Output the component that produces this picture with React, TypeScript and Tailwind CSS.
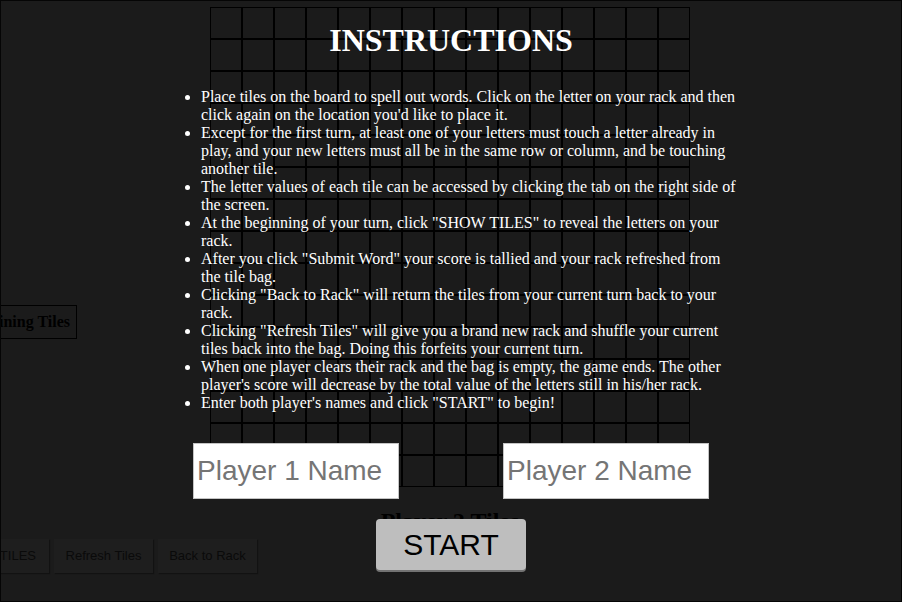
import React from "react";

const items: string[][] = [
  [
    "Place tiles on the board to spell out words. Click on the letter on your rack and then",
    "click again on the location you'd like to place it.",
  ],
  [
    "Except for the first turn, at least one of your letters must touch a letter already in",
    "play, and your new letters must all be in the same row or column, and be touching",
    "another tile.",
  ],
  [
    "The letter values of each tile can be accessed by clicking the tab on the right side of",
    "the screen.",
  ],
  [
    'At the beginning of your turn, click "SHOW TILES" to reveal the letters on your',
    "rack.",
  ],
  [
    'After you click "Submit Word" your score is tallied and your rack refreshed from',
    "the tile bag.",
  ],
  [
    'Clicking "Back to Rack" will return the tiles from your current turn back to your',
    "rack.",
  ],
  [
    'Clicking "Refresh Tiles" will give you a brand new rack and shuffle your current',
    "tiles back into the bag. Doing this forfeits your current turn.",
  ],
  [
    "When one player clears their rack and the bag is empty, the game ends. The other",
    "player's score will decrease by the total value of the letters still in his/her rack.",
  ],
  ['Enter both player\'s names and click "START" to begin!'],
];

export default function App() {
  const cells = Array.from({ length: 225 }, (_, i) => i);
  return (
    <div className="relative w-[902px] h-[602px] overflow-hidden bg-[#1b1b1b] border border-[#050505] font-['Liberation_Serif',serif]">
      {/* background game (dimmed) */}
      <div className="flex flex-col">
        <div className="flex pt-[6px]">
          <div className="w-[209px] shrink-0">
            <div className="mt-[298px] ml-[-52px] w-[128px] h-[34px] border border-black flex items-center justify-end pr-[6px] text-[16px] font-bold text-black whitespace-nowrap">
              Remaining Tiles
            </div>
          </div>
          <div className="flex flex-col items-center">
            <div className="grid grid-cols-[repeat(15,32px)] grid-rows-[repeat(15,32px)]">
              {cells.map((i) => (
                <div key={i} className="border border-black" />
              ))}
            </div>
            <div className="mt-[20px] h-[28px] leading-[28px] text-[24px] font-bold text-black whitespace-nowrap">
              Player 2 Tiles
            </div>
          </div>
        </div>
        <div className="flex gap-[5px] mt-[4px] ml-[-58px] font-['Liberation_Sans',sans-serif] text-[13px] text-[#0a0a0a]">
          <div className="w-[106px] h-[34px] bg-[#1e1e1e] shadow-[1px_1px_1px_#121212] flex items-center justify-end pr-[13px] whitespace-nowrap">
            SHOW TILES
          </div>
          <div className="w-[99px] h-[34px] bg-[#1e1e1e] shadow-[1px_1px_1px_#121212] flex items-center justify-center whitespace-nowrap">
            Refresh Tiles
          </div>
          <div className="w-[99px] h-[34px] bg-[#1e1e1e] shadow-[1px_1px_1px_#121212] flex items-center justify-center whitespace-nowrap">
            Back to Rack
          </div>
        </div>
      </div>

      {/* instructions overlay */}
      <div className="absolute inset-0 flex flex-col items-center pt-[21px] text-white">
        <h1 className="text-[32px] leading-[36px] font-bold">INSTRUCTIONS</h1>
        <ul className="mt-[30px] w-[580px] pl-[40px] list-disc text-[16px] leading-[18px]">
          {items.map((lines, i) => (
            <li key={i} className="whitespace-nowrap">
              {lines.map((l, j) => (
                <React.Fragment key={j}>
                  {j > 0 && <br />}
                  {l}
                </React.Fragment>
              ))}
            </li>
          ))}
        </ul>
        <div className="mt-[31px] flex gap-[104px]">
          <input
            className="w-[206px] h-[56px] bg-white border border-[#c4c4c4] px-[3px] text-[28px] font-['Liberation_Sans',sans-serif] text-black placeholder:text-[#757575] outline-none"
            placeholder="Player 1 Name"
          />
          <input
            className="w-[206px] h-[56px] bg-white border border-[#c4c4c4] px-[3px] text-[28px] font-['Liberation_Sans',sans-serif] text-black placeholder:text-[#757575] outline-none"
            placeholder="Player 2 Name"
          />
        </div>
        <button className="mt-[20px] w-[150px] h-[51px] bg-[#bebebe] rounded-[4px] shadow-[0_2px_0_#737373] text-[30px] font-['Liberation_Sans',sans-serif] text-black flex items-center justify-center">
          START
        </button>
      </div>
    </div>
  );
}
